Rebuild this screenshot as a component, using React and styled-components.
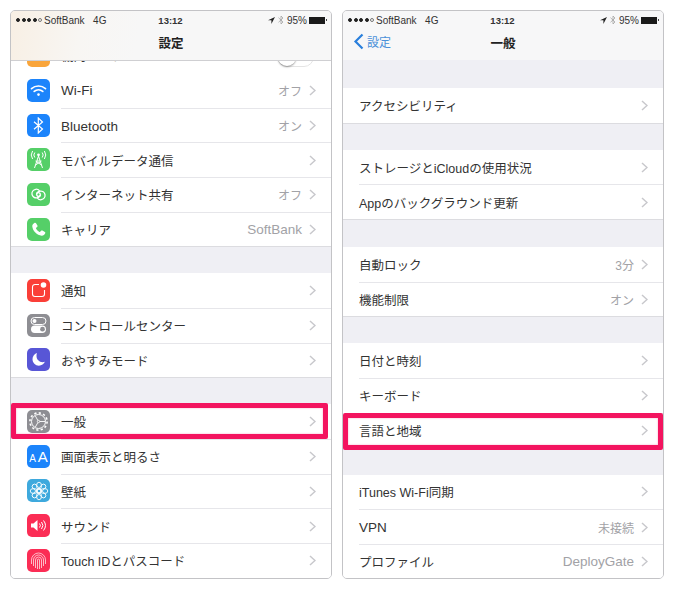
import React from "react";
import styled, { createGlobalStyle } from "styled-components";

const Global = createGlobalStyle`
  html, body { margin: 0; padding: 0; background: #fff; }
  body { font-family: "Liberation Sans", "Noto Sans CJK JP", sans-serif; }
`;

const JP = `"Liberation Sans", "Noto Sans CJK JP", sans-serif`;
const isLatin = (text) => /^[\x20-\x7e]+$/.test(text);

const Page = styled.div`
  width: 674px;
  height: 590px;
  overflow: hidden;
  display: flex;
  gap: 10px;
  padding: 10px 10px 0 10px;
  box-sizing: border-box;
`;

const Phone = styled.div`
  width: 322px;
  height: 569px;
  box-sizing: border-box;
  border: 1px solid #c3c3c6;
  border-radius: 5px;
  background: #efeff4;
  overflow: hidden;
  display: flex;
  flex-direction: column;
  position: relative;
`;

const Header = styled.header`
  height: 49px;
  flex: none;
  background: ${(p) => p.$warm ? "linear-gradient(100deg, #f8efe4 0%, #f8f6f3 22%, #f7f7f7 40%)" : "#f7f7f8"};
  border-bottom: ${(p) => (p.$line ? "1px solid #cfcfd2" : "none")};
  box-sizing: content-box;
  display: flex;
  flex-direction: column;
`;

const StatusBar = styled.div`
  height: 16px;
  padding: 0 6px 0 5px;
  margin-top: 1px;
  display: grid;
  grid-template-columns: 1fr auto 1fr;
  align-items: center;
  font-size: 10px;
  color: #333;
`;

const Carrier = styled.div`
  display: flex;
  align-items: center;
  gap: 1.500px;
  span { margin-left: 0.500px; }
  b { font-weight: 400; margin-left: 7px; }
`;

const Dot = styled.i`
  width: 4px;
  height: 4px;
  border-radius: 50%;
  box-sizing: border-box;
  background: ${(p) => (p.$off ? "transparent" : "#222")};
  border: 1px solid ${(p) => (p.$off ? "#777" : "#222")};
`;

const Clock = styled.div`
  font-weight: 700;
  font-size: 9.500px;
  color: #333;
`;

const StatusRight = styled.div`
  display: flex;
  justify-content: flex-end;
  align-items: center;
  gap: 3px;
`;

const Battery = styled.div`
  width: 16px;
  height: 7px;
  margin-left: -1px;
  background: #1a1a1a;
  position: relative;
  &::after {
    content: "";
    position: absolute;
    right: -2px;
    top: 2.500px;
    width: 1px;
    height: 2px;
    background: #444;
  }
`;

const NavBar = styled.div`
  flex: 1;
  position: relative;
  display: flex;
  align-items: center;
  justify-content: center;
  padding-bottom: 3px;
  font: 700 12.500px ${JP};
  color: #222;
`;

const Back = styled.div`
  position: absolute;
  left: 10px;
  top: 5px;
  display: flex;
  align-items: center;
  gap: 3px;
  font: 400 12px ${JP};
  color: #4a90d9;
`;

const Spacer = styled.div`
  height: ${(p) => p.$h}px;
  flex: none;
`;

const Group = styled.div`
  background: #fff;
  border-bottom: 1px solid #dcdce0;
  flex: none;
`;

const CutRow = styled.div`
  height: 12px;
  flex: none;
  overflow: hidden;
  background: #fff;
  display: flex;
  align-items: flex-end;
  padding: 0 17px 0 16px;
`;

const CutIcon = styled.div`
  width: 23px;
  height: 6px;
  margin-bottom: 6px;
  background: #f9a53b;
  border-radius: 0 0 5px 5px;
`;

const CutLabel = styled.div`
  flex: 1;
  margin-left: 11px;
  margin-bottom: 8px;
  font-size: 12.500px;
  line-height: 15px;
  color: #333;
`;

const CutToggle = styled.div`
  width: 37px;
  height: 20px;
  margin-bottom: 6px;
  border-radius: 10px;
  border: 1px solid #e4e4e4;
  box-sizing: border-box;
  position: relative;
  &::after {
    content: "";
    position: absolute;
    left: 0;
    top: 0;
    width: 18px;
    height: 18px;
    border-radius: 50%;
    background: #fff;
    box-shadow: 0 1px 2px rgba(0, 0, 0, 0.4);
  }
`;

const RowWrap = styled.div`
  height: 34.700px;
  box-sizing: border-box;
  display: flex;
  align-items: center;
  padding-left: 16px;
  position: relative;
`;

const RowBody = styled.div`
  flex: 1;
  height: 100%;
  min-width: 0;
  display: flex;
  align-items: center;
  padding-right: 15px;
  box-sizing: border-box;
  margin-left: ${(p) => (p.$icon ? 11 : 0)}px;
  border-top: ${(p) => (p.$first ? "none" : "1px solid #e6e6ea")};
`;

const IconBox = styled.div`
  width: 23px;
  height: 23px;
  border-radius: 5px;
  background: ${(p) => p.$bg};
  flex: none;
  display: flex;
  align-items: center;
  justify-content: center;
  color: #fff;
  svg { display: block; }
`;

const Label = styled.div`
  flex: 1;
  font-size: ${(p) => (p.$latin ? 13.500 : 12.500)}px;
  padding-top: ${(p) => (p.$latin ? 1 : 0)}px;
  color: #333;
  white-space: nowrap;
`;

const Value = styled.div`
  font-size: ${(p) => (p.$latin ? 13.500 : 12)}px;
  color: #a2a2a6;
  margin-right: 7px;
`;

const Highlight = styled.div`
  position: absolute;
  left: 0;
  top: ${(p) => p.$y}px;
  width: ${(p) => p.$w}px;
  height: ${(p) => p.$h}px;
  box-sizing: border-box;
  border: 5px solid #f3145f;
  border-radius: 2px;
  box-shadow: inset 0 0 2px rgba(243, 20, 95, 0.4);
`;

const Chevron = () => (
  <svg width="7" height="11" viewBox="0 0 7 11" fill="none" stroke="#c8c8cc" strokeWidth="1.5">
    <path d="M1 1l5 4.500L1 10" />
  </svg>
);

const WifiIcon = () => (
  <svg width="17" height="13" viewBox="0 0 17 13" fill="none" stroke="#fff" strokeWidth="1.700" strokeLinecap="round">
    <path d="M1.500 4.600c4-3.500 10-3.500 14 0" />
    <path d="M4.200 7.400c2.500-2.100 6.100-2.100 8.600 0" />
    <circle cx="8.500" cy="10.600" r="1.300" fill="#fff" stroke="none" />
  </svg>
);

const BluetoothIcon = () => (
  <svg width="11" height="17" viewBox="0 0 11 17" fill="none" stroke="#fff" strokeWidth="1.200">
    <path d="M1 4.700l8.500 7.300-4.200 4V1l4.200 4L1 12.300" />
  </svg>
);

const CellIcon = () => (
  <svg width="21" height="19" viewBox="0 0 21 19" fill="none" stroke="#fff" strokeWidth="1">
    <path d="M10.500 6L6.500 18M10.500 6l4 12M8.500 11h4M7.500 15l6-4M13.500 15l-6-4" />
    <circle cx="10.500" cy="4.800" r="1.400" fill="#fff" stroke="none" />
    <path d="M6.800 2.500a4 4 0 0 0 0 5M14.200 2.500a4 4 0 0 1 0 5M4.600 1a7 7 0 0 0 0 8M16.400 1a7 7 0 0 1 0 8" />
  </svg>
);

const HotspotIcon = () => (
  <svg width="17" height="15" viewBox="0 0 17 15" fill="none" stroke="#fff" strokeWidth="1.300">
    <path d="M10 4.500C9 2.800 7.300 2 5.700 2.300 3.200 2.800 1.600 5 2 7.300c.4 2.400 2.700 4 5.100 3.600 1.700-.3 3-1.500 3.200-3 .2-1.300-.7-2.300-1.900-2.300-1.100 0-1.900.8-1.900 1.800" />
    <path d="M7 10.500c1 1.700 2.700 2.500 4.300 2.200 2.500-.5 4.100-2.700 3.700-5-.4-2.400-2.700-4-5.100-3.600-1.700.3-3 1.500-3.200 3-.2 1.300.7 2.300 1.900 2.300 1.100 0 1.900-.8 1.900-1.800" />
  </svg>
);

const PhoneIcon = () => (
  <svg width="17" height="17" viewBox="0 0 24 24" fill="#fff">
    <path d="M6.600 2.500c.7-.4 1.500-.2 1.900.5l2 3.500c.4.700.2 1.400-.4 1.900L8.700 9.600c-.3.300-.4.700-.2 1.100.9 1.900 2.900 3.900 4.800 4.800.4.200.8.100 1.100-.2l1.200-1.400c.5-.6 1.200-.8 1.900-.4l3.500 2c.7.400.9 1.200.5 1.900-1 1.800-2.800 3.600-5 3.400C9.800 20.200 3.800 14.200 3.200 7.500 3 5.300 4.800 3.500 6.600 2.500z" />
  </svg>
);

const NoticeIcon = () => (
  <svg width="23" height="23" viewBox="0 0 23 23" fill="none">
    <path d="M12 5.500H8a2.500 2.500 0 0 0-2.500 2.500v7A2.500 2.500 0 0 0 8 17.500h7a2.500 2.500 0 0 0 2.500-2.500v-4" stroke="#fff" strokeWidth="1.100" />
    <circle cx="16.500" cy="6" r="2.800" fill="#fff" />
  </svg>
);

const ControlIcon = () => (
  <svg width="17" height="18" viewBox="0 0 17 18" fill="none">
    <rect x="1" y="1.500" width="15" height="7" rx="3.500" stroke="#fff" strokeWidth="1" />
    <circle cx="4.500" cy="5" r="2" fill="#fff" />
    <rect x="1" y="9.500" width="15" height="7.500" rx="3.700" fill="#fff" />
    <circle cx="12.500" cy="13.200" r="2.400" fill="#8e8e93" />
  </svg>
);

const MoonIcon = () => (
  <svg width="15" height="15" viewBox="0 0 15 15" fill="#fff">
    <path d="M5.800 1C3.200 2 1.500 4.500 1.500 7.300c0 3.600 2.900 6.400 6.400 6.400 2.700 0 5-1.600 6-3.900-.7.300-1.500.4-2.300.4-3.400 0-6.100-2.700-6.100-6.100 0-1 .1-1.900.3-2.700z" />
  </svg>
);

const GearIcon = () => (
  <svg width="21" height="21" viewBox="0 0 21 21" fill="none" stroke="#fff">
    <circle cx="10.500" cy="10.500" r="8.600" strokeWidth="1.600" strokeDasharray="2.200 2.300" />
    <circle cx="10.500" cy="10.500" r="7" strokeWidth="1" />
    <circle cx="10.500" cy="10.500" r="1.200" strokeWidth="0.800" />
    <path d="M11.700 10.500H17M9.900 9.500L7.300 4.900M9.900 11.500l-2.600 4.600" strokeWidth="0.900" />
  </svg>
);

const FlowerIcon = () => (
  <svg width="20" height="20" viewBox="0 0 20 20" fill="none" stroke="#fff" strokeWidth="0.900">
    <circle cx="10" cy="10" r="2.200" />
    {[0, 45, 90, 135, 180, 225, 270, 315].map((a) => (
      <ellipse key={a} cx="10" cy="4.800" rx="2.500" ry="3.600" transform={`rotate(${a} 10 10)`} />
    ))}
  </svg>
);

const SoundIcon = () => (
  <svg width="17" height="13" viewBox="0 0 17 13" fill="none" stroke="#fff" strokeWidth="1">
    <path d="M1 4.500h2.500L7.500 1v11L3.500 8.500H1z" fill="#fff" stroke="none" />
    <path d="M9.500 4.500a3 3 0 0 1 0 4M11.500 3a5.500 5.500 0 0 1 0 7M13.500 1.500a8 8 0 0 1 0 10" />
  </svg>
);

const FingerIcon = () => (
  <svg width="19" height="19" viewBox="0 0 19 19" fill="none" stroke="#fff" strokeWidth="0.800" opacity="0.850">
    <path d="M2.500 13V9a7 7 0 0 1 14 0v4M4.500 15V9a5 5 0 0 1 10 0v6M6.500 17V9a3 3 0 0 1 6 0v8M8.500 18V9a1 1 0 0 1 2 0v9" />
  </svg>
);

const LocationArrow = () => (
  <svg width="7" height="7" viewBox="0 0 7 7" fill="#222">
    <path d="M7 0L0 3.200h3.400V7z" />
  </svg>
);

const SmallBt = () => (
  <svg width="6" height="10" viewBox="0 0 6 10" fill="none" stroke="#999" strokeWidth="0.700">
    <path d="M.5 2.700L5 7 3 9V1l2 2L.5 7.300" />
  </svg>
);

const AaText = styled.span`
  font: 400 15px ${JP};
  color: #fff;
  display: flex;
  align-items: baseline;
  small { font-size: 10px; margin-right: 2px; }
`;

const Row = ({ icon, bg, label, value, first }) => (
  <RowWrap>
    {icon && <IconBox $bg={bg}>{icon}</IconBox>}
    <RowBody $icon={!!icon} $first={first}>
      <Label $latin={isLatin(label)}>{label}</Label>
      {value && <Value $latin={isLatin(value)}>{value}</Value>}
      <Chevron />
    </RowBody>
  </RowWrap>
);

const Status = () => (
  <StatusBar>
    <Carrier>
      <Dot /><Dot /><Dot /><Dot /><Dot $off />
      <span>SoftBank</span>
      <b>4G</b>
    </Carrier>
    <Clock>13:12</Clock>
    <StatusRight>
      <LocationArrow />
      <SmallBt />
      <span>95%</span>
      <Battery />
    </StatusRight>
  </StatusBar>
);

const Rows = ({ items }) => (
  <Group>
    {items.map((item, i) => (
      <Row key={item.label} first={i === 0} {...item} />
    ))}
  </Group>
);

const network = [
  { label: "Wi-Fi", value: "オフ", bg: "#1c84fb", icon: <WifiIcon /> },
  { label: "Bluetooth", value: "オン", bg: "#1c84fb", icon: <BluetoothIcon /> },
  { label: "モバイルデータ通信", bg: "#55cf68", icon: <CellIcon /> },
  { label: "インターネット共有", value: "オフ", bg: "#55cf68", icon: <HotspotIcon /> },
  { label: "キャリア", value: "SoftBank", bg: "#55cf68", icon: <PhoneIcon /> },
];

const alerts = [
  { label: "通知", bg: "#fa3f38", icon: <NoticeIcon /> },
  { label: "コントロールセンター", bg: "#8e8e93", icon: <ControlIcon /> },
  { label: "おやすみモード", bg: "#5856d6", icon: <MoonIcon /> },
];

const device = [
  { label: "一般", bg: "#8e8e93", icon: <GearIcon /> },
  { label: "画面表示と明るさ", bg: "#1c84fb", icon: <AaText><small>A</small>A</AaText> },
  { label: "壁紙", bg: "#3ea9dd", icon: <FlowerIcon /> },
  { label: "サウンド", bg: "#fb2d55", icon: <SoundIcon /> },
  { label: "Touch IDとパスコード", bg: "#fb2d55", icon: <FingerIcon /> },
];

const BackChevron = () => (
  <svg width="11" height="17" viewBox="0 0 11 17" fill="none" stroke="#2a7fdc" strokeWidth="2.200">
    <path d="M9.500 1.500L2.500 8.500l7 7" />
  </svg>
);

export default function App() {
  return (
    <Page>
      <Global />
      <Phone>
        <Header $warm $line>
          <Status />
          <NavBar>設定</NavBar>
        </Header>
        <CutRow>
          <CutIcon />
          <CutLabel>機内モード</CutLabel>
          <CutToggle />
        </CutRow>
        <Rows items={network} />
        <Spacer $h={25.7} />
        <Rows items={alerts} />
        <Spacer $h={26} />
        <Rows items={device} />
        <Highlight $y={392} $w={317} $h={36} />
      </Phone>
      <Phone>
        <Header>
          <Status />
          <NavBar>
            <Back><BackChevron />設定</Back>
            一般
          </NavBar>
        </Header>
        <Spacer $h={28} />
        <Rows items={[{ label: "アクセシビリティ" }]} />
        <Spacer $h={26} />
        <Rows items={[{ label: "ストレージとiCloudの使用状況" }, { label: "Appのバックグラウンド更新" }]} />
        <Spacer $h={27} />
        <Rows items={[{ label: "自動ロック", value: "3分" }, { label: "機能制限", value: "オン" }]} />
        <Spacer $h={26} />
        <Rows items={[{ label: "日付と時刻" }, { label: "キーボード" }, { label: "言語と地域" }]} />
        <Spacer $h={26} />
        <Rows items={[{ label: "iTunes Wi-Fi同期" }, { label: "VPN", value: "未接続" }, { label: "プロファイル", value: "DeployGate" }]} />
        <Highlight $y={402} $w={320} $h={37} />
      </Phone>
    </Page>
  );
}
